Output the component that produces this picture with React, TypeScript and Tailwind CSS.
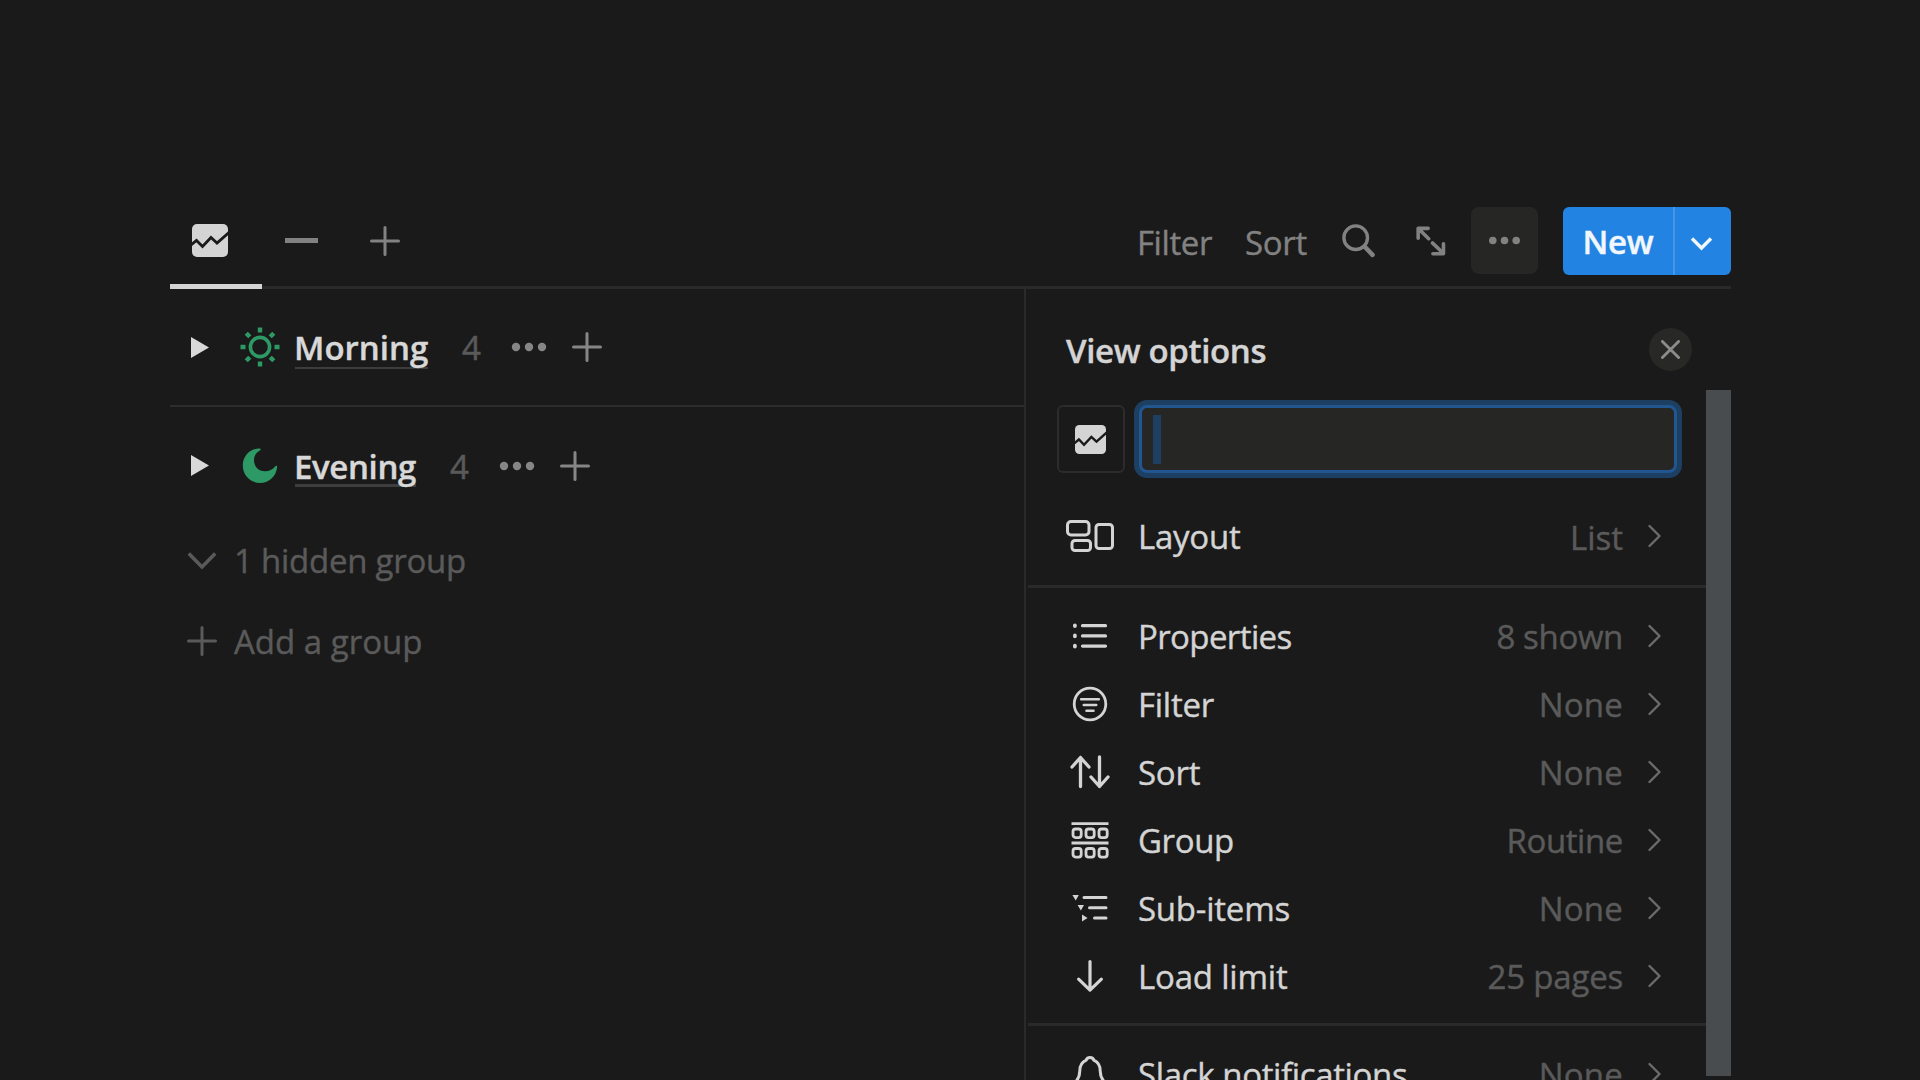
import React from "react";

const ChartIcon = ({ className }: { className: string }) => (
  <svg className={className} viewBox="0 0 36 33" preserveAspectRatio="none" fill="none">
    <rect x="0" y="0" width="36" height="33" rx="5" fill="#d4d4d4" />
    <path d="M-1 21L4.5 16.5L10.5 22.5L19 13.5L25 19L37 8.5" stroke="#1a1a1a" strokeWidth="2.8" />
  </svg>
);

const PlusIcon = ({ className }: { className: string }) => (
  <svg className={className} viewBox="0 0 30 30" fill="none">
    <path d="M15 1.5V28.5M1.5 15H28.5" stroke="currentColor" strokeWidth="3" strokeLinecap="round" />
  </svg>
);

const DotsIcon = ({ className }: { className: string }) => (
  <svg className={className} viewBox="0 0 36 10" fill="currentColor">
    <circle cx="5" cy="5" r="4.2" />
    <circle cx="18" cy="5" r="4.2" />
    <circle cx="31" cy="5" r="4.2" />
  </svg>
);

const ChevronRight = () => (
  <svg className="w-[16px] h-[24px] text-[#6b6b6b]" viewBox="0 0 16 24" fill="none">
    <path d="M2.5 2L12.5 12L2.5 22" stroke="currentColor" strokeWidth="2.4" strokeLinecap="round" strokeLinejoin="round" />
  </svg>
);

const SunIcon = () => (
  <svg className="w-[40px] h-[40px]" viewBox="0 0 40 40" fill="none" stroke="#2d9964">
    <circle cx="20" cy="20" r="9.6" strokeWidth="3.6" />
    <path
      d="M20 0.5V5.5M20 34.5V39.5M0.5 20H5.5M34.5 20H39.5M6.2 6.2L9.8 9.8M30.2 30.2L33.8 33.8M6.2 33.8L9.8 30.2M30.2 9.8L33.8 6.2"
      strokeWidth="4.4"
    />
  </svg>
);

const MoonIcon = () => (
  <svg className="w-[40px] h-[40px]" viewBox="0 0 40 40" fill="#2d9964">
    <path d="M19.6 2.6C11 2.2 2.8 9.3 2.8 19.6C2.8 29.6 10.6 37 20 37C29.4 37 36.4 30 37.2 20.8C37.3 19.6 36.2 19.2 35.3 20.2C32.6 23.6 29.2 25.2 25 25.2C18.6 25.2 14 20.7 14 14.2C14 9.7 16.2 6.3 20 4.4C21.1 3.8 20.8 2.7 19.6 2.6Z" />
  </svg>
);

const groups = [
  {
    name: "Morning",
    icon: <SunIcon />,
    row: "h-[118px] border-b-2 border-[#2c2c2c]",
    arrow: "",
    text: "tracking-normal w-[134px]",
    line: "top-[45px] h-[2px]",
  },
  {
    name: "Evening",
    icon: <MoonIcon />,
    row: "h-[118px]",
    arrow: "mb-[2px]",
    text: "tracking-[-0.36px] w-[122px]",
    line: "top-[43px] h-[3px]",
  },
];

const layoutIcon = (
  <svg className="w-[48px] h-[32px]" viewBox="0 0 48 32" fill="none" stroke="currentColor" strokeWidth="3">
    <rect x="1.5" y="1.5" width="21.5" height="13.5" rx="3.5" />
    <rect x="6" y="20.5" width="18.5" height="10" rx="3" />
    <rect x="30" y="4.5" width="16.5" height="24" rx="3" />
  </svg>
);

const listIcon = (
  <svg className="w-[36px] h-[28px]" viewBox="0 0 36 28" fill="none" stroke="currentColor" strokeWidth="3.2" strokeLinecap="round">
    <path d="M10.5 3.7H33.5M10.5 13.9H33.5M10.5 24.1H33.5" />
    <path d="M2.9 3.3V4.1M2.9 13.5V14.3M2.9 23.7V24.5" strokeWidth="3.8" />
  </svg>
);

const filterIcon = (
  <svg className="w-[36px] h-[36px]" viewBox="0 0 36 36" fill="none" stroke="currentColor" strokeWidth="2.8" strokeLinecap="round">
    <circle cx="18" cy="18" r="15.8" />
    <path d="M9.2 13.3H26.8M11.8 19H24.2M14.5 24.7H21.5" strokeWidth="2.6" />
  </svg>
);

const sortIcon = (
  <svg className="w-[40px] h-[34px]" viewBox="0 0 40 34" fill="none" stroke="currentColor" strokeWidth="3.3" strokeLinecap="round" strokeLinejoin="round">
    <path d="M10.5 31.5V2.5M2 12L10.5 2.5L19 12" />
    <path d="M29.5 2V31.5M21 22L29.5 31.5L38 22" />
  </svg>
);

const groupIcon = (
  <svg className="w-[38px] h-[37px]" viewBox="0 0 38 37" fill="none" stroke="currentColor" strokeWidth="2.8">
    <path d="M0.5 1.6H37.5M0.5 21H37.5" />
    <rect x="2" y="7" width="8.2" height="8.6" rx="2.5" />
    <rect x="15" y="7" width="8.2" height="8.6" rx="2.5" />
    <rect x="28" y="7" width="8.2" height="8.6" rx="2.5" />
    <rect x="2" y="26.5" width="8.2" height="8.6" rx="2.5" />
    <rect x="15" y="26.5" width="8.2" height="8.6" rx="2.5" />
    <rect x="28" y="26.5" width="8.2" height="8.6" rx="2.5" />
  </svg>
);

const subItemsIcon = (
  <svg className="w-[36px] h-[28px]" viewBox="0 0 36 28" fill="currentColor">
    <path d="M12 3.5H34M17.5 13.7H34M22.5 24H34" stroke="currentColor" strokeWidth="3" strokeLinecap="round" />
    <path d="M0.4 1H6.8L3.7 6.4ZM5.6 11H12L8.9 16.4ZM10 20.6L15.6 24L10 27.400Z" />
  </svg>
);

const downIcon = (
  <svg className="w-[28px] h-[34px]" viewBox="0 0 28 34" fill="none" stroke="currentColor" strokeWidth="3.2" strokeLinecap="round" strokeLinejoin="round">
    <path d="M14 2.5V31M2.6 20.2L14 31.2L25.4 20.2" />
  </svg>
);

const bellIcon = (
  <svg className="w-[36px] h-[40px]" viewBox="0 0 36 40" fill="none" stroke="currentColor" strokeWidth="3" strokeLinecap="round" strokeLinejoin="round">
    <path d="M14.2 6.2C14.6 4.4 16 3.5 18 3.5C20 3.5 21.4 4.4 21.8 6.2C26 8 28.2 11.6 28.2 17C28.2 22 29.5 24.5 32 27.5C33.2 29 32.5 30.5 30.5 30.5H5.5C3.5 30.5 2.8 29 4 27.5C6.5 24.5 7.8 22 7.8 17C7.8 11.6 10 8 14.2 6.2Z" />
    <path d="M13.5 35C14.5 37 16 38 18 38C20 38 21.5 37 22.5 35" />
  </svg>
);

type OptionProps = {
  icon: React.ReactNode;
  label: string;
  value: string;
  labelClass?: string;
  valueClass?: string;
};

const Option = ({ icon, label, value, labelClass = "", valueClass = "" }: OptionProps) => (
  <div className="flex h-[68px] items-center pl-[30px] pr-[43px] shrink-0">
    <div className="flex w-[67px] justify-center text-[#d4d4d4]">{icon}</div>
    <span className={`ml-[15px] pt-[2px] whitespace-nowrap text-[#d4d4d4] ${labelClass}`}>{label}</span>
    <span className={`ml-auto whitespace-nowrap text-[#5a5a5a] ${valueClass}`}>{value}</span>
    <div className="ml-[24px]">
      <ChevronRight />
    </div>
  </div>
);

const mainOptions: OptionProps[] = [
  { icon: listIcon, label: "Properties", value: "8 shown", labelClass: "tracking-[-0.61px]", valueClass: "pt-[2px] tracking-[-0.35px]" },
  { icon: filterIcon, label: "Filter", value: "None", labelClass: "tracking-[-0.25px]", valueClass: "pt-[2px] tracking-[0.2px]" },
  { icon: sortIcon, label: "Sort", value: "None", labelClass: "tracking-[-0.25px]", valueClass: "pt-[2px] tracking-[0.2px]" },
  { icon: groupIcon, label: "Group", value: "Routine", labelClass: "tracking-[-0.39px]", valueClass: "pt-[2px] tracking-[-0.4px]" },
  { icon: subItemsIcon, label: "Sub-items", value: "None", labelClass: "tracking-[-0.23px]", valueClass: "pt-[2px] tracking-[0.2px]" },
  { icon: downIcon, label: "Load limit", value: "25 pages", labelClass: "tracking-[-0.2px]", valueClass: "pt-[2px] tracking-[-0.2px]" },
];

const Toolbar = () => (
  <div className="flex h-[99px] w-full shrink-0 items-center border-b-3 border-[#2a2a2a] pt-[5px] text-[#828282]">
    <div className="relative flex w-[92px] items-center justify-center self-stretch">
      <ChartIcon className="ml-[-13px] w-[36px] h-[33px]" />
      <div className="absolute -bottom-[3px] left-0 h-[5px] w-full bg-[#d4d4d4]"></div>
    </div>
    <div className="ml-[23px] h-[5px] w-[33px] bg-[#828282]"></div>
    <PlusIcon className="ml-[52px] w-[30px] h-[30px]" />

    <span className="ml-auto pt-[4px] tracking-[-0.4px]">Filter</span>
    <span className="ml-[33px] pt-[4px] tracking-[-0.31px]">Sort</span>
    <svg className="ml-[35px] w-[34px] h-[34px]" viewBox="0 0 34 34" fill="none" stroke="currentColor" strokeLinecap="round">
      <circle cx="13.7" cy="13.7" r="11.8" strokeWidth="3.4" />
      <path d="M23 23L30.5 30.8" strokeWidth="4.6" />
    </svg>
    <svg className="ml-[40px] w-[30px] h-[30px]" viewBox="0 0 32 31" fill="none" stroke="currentColor" strokeWidth="3.8" strokeLinecap="round" strokeLinejoin="round">
      <path d="M13.5 13L2.5 2.2M13 2H2.3V12.5" />
      <path d="M17.5 17.5L29 28.5M18 29H29.3V18.5" />
    </svg>
    <button className="ml-[25px] flex h-[67px] w-[67px] items-center justify-center rounded-lg bg-[#262624]">
      <DotsIcon className="w-[33px] h-[9px]" />
    </button>
    <div className="ml-[25px] flex h-[68px] w-[168px] overflow-hidden rounded-[6px] bg-[#2383e2] text-[#f2f7fd]">
      <button className="w-[112px] border-r-2 border-[#4496e6] font-semibold leading-[70px] tracking-[-0.2px]">New</button>
      <button className="flex flex-1 items-center justify-center pt-[5px] pr-[4px]">
        <svg className="w-[23px] h-[15px]" viewBox="0 0 23 15" fill="none">
          <path d="M2 2.5L11.5 12L21 2.5" stroke="currentColor" strokeWidth="3.4" />
        </svg>
      </button>
    </div>
  </div>
);

const GroupList = () => (
  <div className="w-[854px] shrink-0">
    {groups.map((group) => (
      <div key={group.name} className={`flex items-center ${group.row}`}>
        <svg className={`ml-[21px] w-[18px] h-[21px] ${group.arrow}`} viewBox="0 0 18 21" fill="#d8d8d8">
          <path d="M0 0L18 10.5L0 21Z" />
        </svg>
        <div className="ml-[31px]">{group.icon}</div>
        <div className={`relative ml-[14px] font-semibold leading-[51px] text-[#d8d8d8] ${group.text}`}>
          <div className={`absolute left-[1px] right-0 bg-[#3d3d3d] ${group.line}`}></div>
          <span className="relative">{group.name}</span>
        </div>
        <span className="ml-[34px] pt-[2px] text-[#5a5a5a] [-webkit-text-stroke:0.5px]">4</span>
        <DotsIcon className="ml-[30px] w-[36px] h-[10px] text-[#868686]" />
        <PlusIcon className="ml-[25px] w-[30px] h-[30px] text-[#868686]" />
      </div>
    ))}
    <div className="flex h-[72px] items-center text-[#5a5a5a]">
      <svg className="ml-[17px] w-[30px] h-[20px]" viewBox="0 0 30 20" fill="none">
        <path d="M1.8 2.5L15 16L28.2 2.5" stroke="currentColor" strokeWidth="3.6" />
      </svg>
      <span className="ml-[17px] tracking-[-0.25px]">1 hidden group</span>
    </div>
    <div className="mt-[6px] flex h-[76px] items-center text-[#5a5a5a]">
      <PlusIcon className="ml-[17px] w-[30px] h-[30px]" />
      <span className="ml-[17px] pt-px">Add a group</span>
    </div>
  </div>
);

const ViewOptions = () => (
  <div className="flex h-[791px] flex-1 flex-col border-l-2 border-[#2a2a2a]">
    <div className="flex h-[101px] shrink-0 items-center justify-between pl-[40px] pr-[39px] pt-[19px]">
      <h2 className="pt-[4px] font-semibold tracking-[-0.35px] text-[#d4d4d4]">View options</h2>
      <button className="flex h-[43px] w-[43px] items-center justify-center rounded-full bg-[#282826]">
        <svg className="w-[19px] h-[19px]" viewBox="0 0 20 20" fill="none">
          <path d="M1.5 1.5L18.5 18.5M18.5 1.5L1.5 18.5" stroke="#8c8c8c" strokeWidth="3" strokeLinecap="round" />
        </svg>
      </button>
    </div>
    <div className="flex min-h-0 flex-1">
      <div className="flex flex-1 flex-col overflow-hidden">
        <div className="flex shrink-0 items-center pl-[31px] pt-[10px]">
          <div className="flex h-[68px] w-[68px] items-center justify-center rounded-md border-2 border-[#2c2c2c]">
            <ChartIcon className="ml-[-2px] w-[31px] h-[29px]" />
          </div>
          <div className="ml-[9px] flex h-[78px] w-[548px] items-center rounded-[13px] bg-[#1d3f62] p-[5px]">
            <div className="flex h-full w-full items-center rounded-[8px] border-3 border-[#215691] bg-[#262624]">
              <div className="ml-[11px] h-[49px] w-[8px] bg-[#1d3f62]"></div>
            </div>
          </div>
        </div>
        <div className="h-[24px] shrink-0"></div>
        <Option icon={layoutIcon} label="Layout" value="List" labelClass="tracking-[-0.24px]" valueClass="pt-[4px]" />
        <div className="ml-0.5 mt-[15px] mb-[14px] h-[3px] shrink-0 bg-[#2a2a2a]"></div>
        {mainOptions.map((option) => (
          <Option key={option.label} {...option} />
        ))}
        <div className="ml-0.5 mt-[13px] mb-[14px] h-[3px] shrink-0 bg-[#2a2a2a]"></div>
        <Option icon={bellIcon} label="Slack notifications" value="None" labelClass="tracking-[-0.36px]" valueClass="pt-[2px] tracking-[0.2px]" />
      </div>
      <div className="h-[686px] w-[25px] bg-[#484c4f]"></div>
    </div>
  </div>
);

export default function App() {
  return (
    <div className="h-[1080px] w-[1920px] overflow-hidden bg-[#1a1a1a] pt-[190px] pl-[170px] pr-[189px] font-['Open_Sans',sans-serif] text-[33px] leading-[48px] [-webkit-text-stroke:0.4px]">
      <Toolbar />
      <div className="flex">
        <GroupList />
        <ViewOptions />
      </div>
    </div>
  );
}
